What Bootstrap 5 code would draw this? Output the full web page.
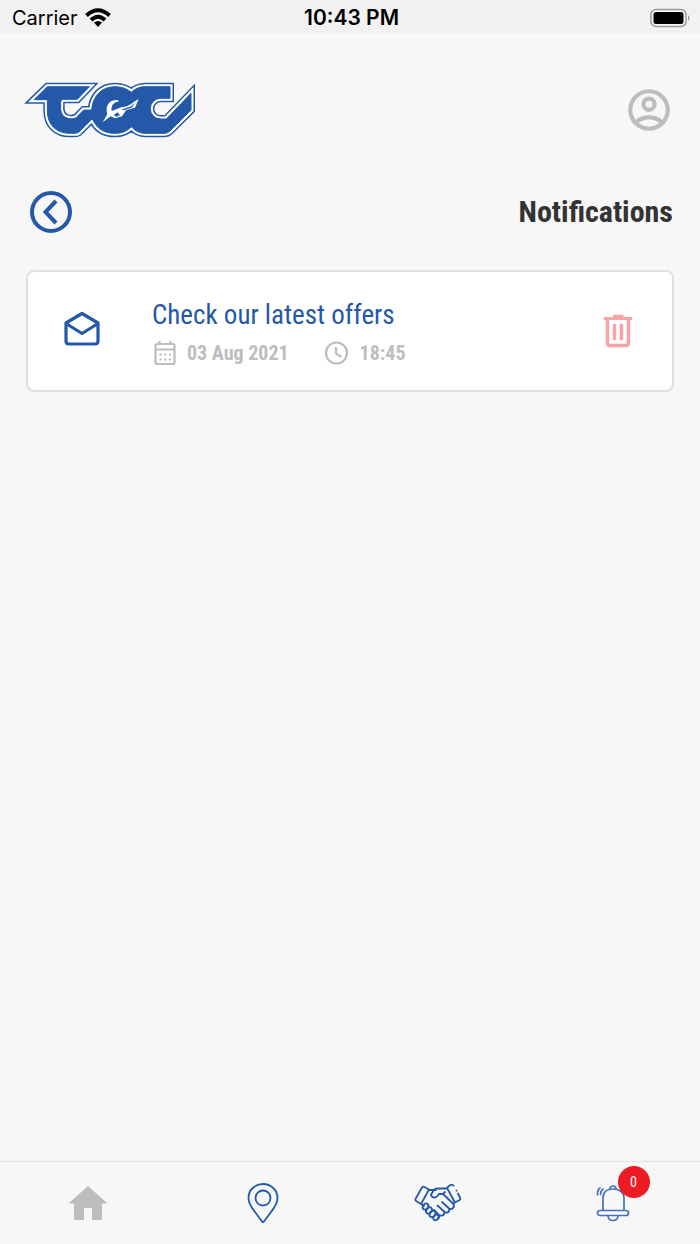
<!DOCTYPE html>
<html lang="en">
<head>
<meta charset="utf-8">
<meta name="viewport" content="width=device-width, initial-scale=1">
<title>Notifications</title>
<link href="https://cdn.jsdelivr.net/npm/bootstrap@5.3.0/dist/css/bootstrap.min.css" rel="stylesheet">
<style>
:root { --brand: #2459a9; --muted: #bdbdbd; --page: #f7f7f7; }
body { background: var(--page); font-family: "Roboto Condensed", "Liberation Sans Narrow", Roboto, sans-serif; }
svg { display: block; overflow: visible; }
.status { height: 34px; background: #f1f1f1; color: #000; font: 20px/36px Inter, sans-serif; padding: 0 9px; }
.status .carrier { padding-left: 3px; gap: 7px; }
.status .clock { font-size: 21px; font-weight: 600; }
.brandbar { padding: 48px 26px 0; }
.titlebar { padding: 49px 27px 0 26px; }
.titlebar h1 { font-size: 30px; line-height: 50px; font-weight: 700; color: #333; }
.plain { background: none; border: 0; padding: 0; }
.notices { padding: 33px 26px 0; }
.notice { border: 2px solid #e0e0e0; border-radius: 8px; min-height: 122px; }
.lead-icon { width: 108px; }
.notice h2 { font-size: 27px; line-height: 36px; font-weight: 400; }
.notice h2 a { color: var(--brand); }
.meta { color: var(--muted); font-size: 20px; line-height: 26px; font-weight: 700; padding-top: 7px; gap: 34px; }
.meta > span { gap: 10px; }
.tabs { border-top: 1px solid #e2e2e2; height: 83px; }
.count { position: absolute; left: 22px; top: -18px; width: 32px; height: 32px; border-radius: 50%; background: #ed1c24; color: #fff; font-size: 14px; line-height: 32px; }
</style>
</head>
<body class="d-flex flex-column min-vh-100">

<div class="status row g-0">
  <div class="carrier col d-flex align-items-center">
    <span>Carrier</span>
    <svg width="26" height="20" viewBox="0 0 26 20" fill="none" stroke="#000" stroke-width="4"><path d="M1.500 7.500Q13-3 24.500 7.500M6 12Q13 5.500 20 12"/><path d="M13 19l-4-4.500q4-3 8 0z" fill="#000" stroke="none"/></svg>
  </div>
  <div class="col-auto clock">10:43 PM</div>
  <div class="col d-flex align-items-center justify-content-end">
    <svg width="41" height="20" viewBox="0 0 41 20"><rect x="1" y="1.500" width="35" height="17" rx="5" fill="#f7f7f7" stroke="#999" stroke-width="1.500"/><rect x="3.500" y="4" width="30" height="12" rx="2.500"/><path d="M38 7q3 3 0 6z" fill="#999"/></svg>
  </div>
</div>

<header class="brandbar d-flex justify-content-between align-items-center">
  <a href="#" aria-label="TEC">
    <svg width="170" height="56" viewBox="18 21 510 168">
      <defs>
        <path id="mark-shape" d="M42 74L82 35H208L172 73H130Q122 73 122 82V104A31 31 0 0 0 179 117L191 105H215C218 62 246 35 285 35C305 35 323 42 334 52C345 41 358 35 376 35H450V70H422A31 31 0 0 0 422 132H439L513 55V105L450 168Q443 175 432 175H376C358 175 345 167 334 155C322 168 306 175 285 175C250 175 228 158 217 131L180 168Q174 175 165 175H150C108 175 82 148 82 107V74Z"/>
      </defs>
      <use href="#mark-shape" fill="#2459a9" stroke="#2459a9" stroke-width="24"/>
      <use href="#mark-shape" fill="#fff" stroke="#fff" stroke-width="15"/>
      <use href="#mark-shape" fill="#2459a9" stroke="#2459a9" stroke-width="3"/>
      <path d="M248 142L262 118C256 97 264 80 281 76Q294 73 297 79C280 82 272 93 275 108L304 97Q325 96 340 82L356 72L345 98L318 106L306 124L285 130L272 124Z" fill="#fff"/>
      <path d="M281 120l12-8 7 9-11 4zM306 103l25-8 14-12-10 15-24 8z" fill="#2459a9"/>
    </svg>
  </a>
  <button class="plain" type="button" aria-label="Account">
    <svg width="50" height="50" viewBox="0 0 24 24" fill="#bdbdbd"><path d="M12 2a10 10 0 1 0 0 20 10 10 0 0 0 0-20zM7.070 18.280C7.500 17.380 10.120 16.500 12 16.500s4.500.88 4.930 1.780A7.900 7.900 0 0 1 12 20a7.900 7.900 0 0 1-4.930-1.720zm11.290-1.450C16.930 15.090 13.460 14.500 12 14.500s-4.930.59-6.360 2.330A8 8 0 1 1 18.360 16.830zM12 5.500a3.700 3.700 0 1 0 0 7.400 3.700 3.700 0 0 0 0-7.400zm0 5.300a1.600 1.600 0 1 1 0-3.200 1.600 1.600 0 0 1 0 3.200z"/></svg>
  </button>
</header>

<div class="titlebar d-flex justify-content-between align-items-center">
  <button class="plain" type="button" aria-label="Back">
    <svg width="50" height="50" viewBox="0 0 50 50" fill="none" stroke="#2459a9" stroke-width="4"><circle cx="25" cy="25" r="19"/><path d="M30 14L19.500 25 30 36"/></svg>
  </button>
  <h1 class="m-0">Notifications</h1>
</div>

<main class="notices flex-grow-1">
  <article class="notice bg-white d-flex align-items-center">
    <div class="lead-icon d-flex justify-content-center flex-shrink-0 pb-1">
      <svg width="38" height="38" viewBox="0 0 38 38" fill="none" stroke="#2459a9" stroke-width="3.200" stroke-linejoin="round"><path d="M3 13L19 3.500 35 13V31Q35 34 32 34H6Q3 34 3 31Z"/><path d="M3 13.500L19 23.500 35 13.500"/></svg>
    </div>
    <div class="flex-grow-1 ps-3">
      <h2 class="m-0"><a href="#" class="text-decoration-none">Check our latest offers</a></h2>
      <div class="meta d-flex">
        <span class="d-flex align-items-center">
          <svg width="25" height="26" viewBox="0 0 25 26" fill="none" stroke="#bdbdbd" stroke-width="2.200"><rect x="3.500" y="4" width="19" height="20" rx="1.500"/><path d="M3 9.500H22M7.500 1V5M18.500 1V5"/><path d="M7.500 14.500H19.500M7.500 19.500H19.500" stroke-dasharray="2.200 2.500"/></svg>
          <span>03 Aug 2021</span>
        </span>
        <span class="d-flex align-items-center">
          <svg width="27" height="26" viewBox="0 0 27 26" fill="none" stroke="#bdbdbd" stroke-width="2.200"><circle cx="13.500" cy="13" r="10.500"/><path d="M13 7V13.500L18.500 17"/></svg>
          <span>18:45</span>
        </span>
      </div>
    </div>
    <button class="plain me-4 pe-3" type="button" aria-label="Delete">
      <svg width="28" height="34" viewBox="0 0 28 34" fill="none" stroke="#f8a3a8"><path d="M0 4.500H28" stroke-width="3"/><path d="M9 2H19.500" stroke-width="2.500"/><path d="M3.500 5V29Q3.500 31.500 6 31.500H22Q24.500 31.500 24.500 29V5" stroke-width="3.500"/><path d="M10.500 10V26M17.500 10V26" stroke-width="3.500"/></svg>
    </button>
  </article>
</main>

<nav class="tabs row g-0 align-items-center text-center" aria-label="Main">
  <a class="col d-flex justify-content-center" href="#" aria-label="Home">
    <svg width="40" height="34" viewBox="0 0 40 34"><path d="M20 0L39.500 17.500H34V34H24V22H16V34H6V17.500H.5Z" fill="#bdbdbd"/></svg>
  </a>
  <a class="col d-flex justify-content-center" href="#" aria-label="Locations">
    <svg width="32" height="42" viewBox="0 0 32 42" fill="none" stroke="#2459a9" stroke-width="1.800"><path d="M16 2C8 2 1.500 8 1.500 16C1.500 22 5 26 8 30L15 39.500Q16 41 17 39.500L24 30C27 26 30.500 22 30.500 16C30.500 8 24 2 16 2Z"/><circle cx="16" cy="16" r="7.500"/></svg>
  </a>
  <a class="col d-flex justify-content-center" href="#" aria-label="Partners">
    <svg width="48" height="38" viewBox="0 0 48 38" fill="none" stroke="#2459a9" stroke-width="1.800" stroke-linecap="round" stroke-linejoin="round"><path d="M1.500 15L8 3.500Q9 2 10.500 3L15 5.500 7 20 2 17Q1 16 1.500 15ZM38.500 1Q37 0 35 2L33 4 41 18.500 45.500 16Q47 15 46 13.500L44 9.500M39.500 1.500v.2M42.500 6.500v.2M14.500 6H22M7.500 20L10 22M33 4.500H23Q21 4.500 20 6L17 10.500Q17.500 14 21 13.500Q23.500 12.500 25 10H29L39 19.500Q41 22 39 24Q37.500 26 35 24.500L28 18M29 10L31 8M35 24.500Q36 28 33 28.500Q31 29 30 27.500L23.500 21.500M30 27.500Q31 31 28 31.500Q26 32 25 31L20 26M25 31Q26 34 23 35.500M40.500 19L39 20"/><ellipse cx="11.500" cy="22.500" rx="2.500" ry="3.300" transform="rotate(40 11.500 22.500)"/><ellipse cx="15" cy="26.500" rx="2.500" ry="3.500" transform="rotate(40 15 26.500)"/><ellipse cx="18.500" cy="30" rx="2.500" ry="3.500" transform="rotate(40 18.500 30)"/><ellipse cx="22" cy="33.500" rx="2.300" ry="3" transform="rotate(40 22 33.500)"/></svg>
  </a>
  <a class="col d-flex justify-content-center text-decoration-none" href="#" aria-label="Notifications">
    <span class="position-relative">
      <svg width="34" height="38" viewBox="0 0 34 38" fill="none" stroke="#4472b8" stroke-width="1.700" stroke-linecap="round"><path d="M7 26V14C7 8 11 5 17 5S28 8 28 14V26M14 5Q14 2 17 2T20 5"/><rect x="1.500" y="26.500" width="31" height="5" rx="2.500"/><path d="M12 32Q12.500 36.500 17 36.500T22 32M1.500 11Q1 6 4 4M4.500 10.500Q4.500 7 7 5"/></svg>
      <span class="count">0</span>
    </span>
  </a>
</nav>

<script src="https://cdn.jsdelivr.net/npm/bootstrap@5.3.0/dist/js/bootstrap.bundle.min.js"></script>
</body>
</html>
